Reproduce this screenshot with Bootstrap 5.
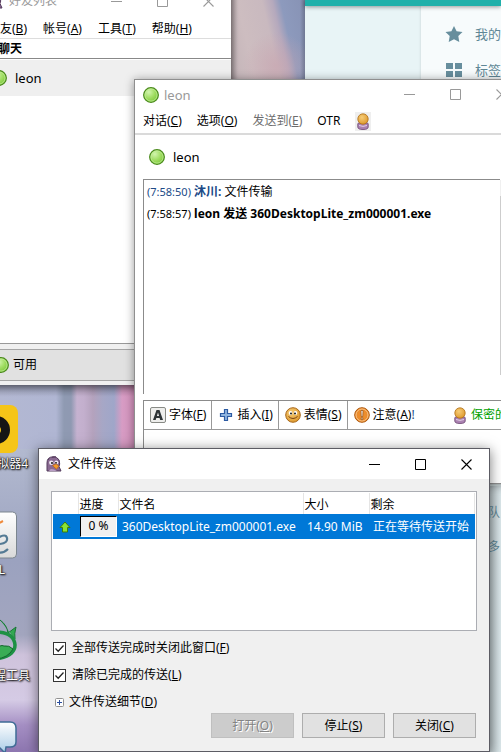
<!DOCTYPE html>
<html lang="zh-CN">
<head>
<meta charset="utf-8">
<meta name="viewport" content="width=device-width, initial-scale=1">
<title>文件传送</title>
<link href="https://cdn.jsdelivr.net/npm/bootstrap@5.3.0/dist/css/bootstrap.min.css" rel="stylesheet">
<style>
  body { font-family: "Noto Sans", "Noto Sans CJK SC", sans-serif; font-size: 12px; line-height: 18px; color: #000; }
  svg { flex: none; display: block; }
  button { font: inherit; color: inherit; white-space: nowrap; }
  .plain { border: 0; background: none; padding: 0; }
  .plain:disabled { color: #6d6d6d; }

  /* wallpaper */
  .desktop { background: linear-gradient(180deg, #a9aec6 0, #b3bad0 450px, #9ba2bf 560px, #a3a6bf 635px, #cfc3dc 655px, #d5cbe5 700px, #a58fc4 725px, #8d76b0 752px); }
  .wall-top { left: 231px; top: 0; width: 74px; height: 80px;
    background: linear-gradient(90deg, #0003 0, #0000 7px, #0000 69px, #0003 100%), radial-gradient(circle at 46px 66px, #c9a5b0aa 0, #c9a5b000 34px), linear-gradient(77deg, #c2b3b7 0, #cdbdc0 24px, #c9b9bf 48px, #b5a9bd 58px, #8d9abd 66px, #8792b4 100%); }
  .wall-mid { left: 0; top: 385px; width: 135px; height: 64px;
    background: linear-gradient(180deg, #0003 0, #0000 12px), linear-gradient(90deg, #b3b8d2 0, #b0b6d3 56px, #8f9ab2 64px, #8f99b2 71px, #c5b2d0 77px, #c3afcd 84px, #b4a2bd 93px, #a6a7c6 103px, #9fa6c9 114px, #d79cc4 122px, #d493bd 135px); }

  .win { background: #fff; }
  .muted { color: #999; }
  .person { font-size: 13px; }
  .controls { gap: 35px; }

  /* browser */
  .browser { left: 305px; right: 0; top: 0; bottom: 0; background: #e8f4f6; color: #5f8796; font-size: 13px; }
  .browser-bar { height: 6px; background: #20b0aa; box-shadow: 0 1px 4px #0006; }
  .side { margin-left: 116px; background: #f7fbfc; padding: 2px 0 0 24px; box-shadow: 0 0 3px #0002; height: 478px; }
  .side-item { height: 36px; gap: 12px; white-space: nowrap; }
  .browser-text { left: 488px; top: 486px; right: 0; color: #5f8796; background: linear-gradient(90deg, #b5c0c3, #dbe7ea 12px); bottom: 0; padding: 18px 0 0; white-space: nowrap; }

  /* buddy list */
  .buddies { left: -15px; top: -15px; width: 246px; height: 400px; box-shadow: 0 2px 7px #0007; }
  .buddies .titlebar { height: 32px; padding: 0 17px 0 2px; gap: 6px; }
  .buddies .menu { height: 22px; padding: 2px 0 0 3px; gap: 16px; border-bottom: 1px solid #ddd; }
  .group-head { height: 20px; padding: 1px 0 0 13px; font-weight: 700; border-bottom: 1px solid #888; }
  .buddy-row { height: 36px; margin-top: 1px; padding-left: 6px; gap: 8px; background: #efefef; }
  .status-wrap { background: #f0f0f0; border-top: 1px solid #999; padding: 5px 0 4px; }
  .status { height: 32px; width: 100%; background: #e1e1e1; border: 1px solid #a5a5a5; padding-left: 6px; gap: 3px; }

  /* chat */
  .chat { left: 134px; right: -14px; top: 79px; height: 405px; border: 1px solid #8f8f8f; box-shadow: 0 1px 9px #0006; }
  .chat .titlebar { height: 29px; padding: 0 7px 0 8px; gap: 5px; }
  .chat .menu { height: 26px; padding: 0 8px; gap: 15px; border-bottom: 2px solid #dadada; }
  .menu-icon { background: #efefef; padding: 1px 2px; }
  .chat-name { height: 44px; padding-left: 14px; gap: 8px; }
  .log { height: 215px; margin: 0 0 0 8px; border-top: 1px solid #8b8b8b; border-left: 1px solid #8b8b8b; padding: 1px 0 0 3px; }
  .log-text { line-height: 22px; white-space: nowrap; }
  .log-text time { font-size: 11px; }
  .blue { color: #204a87; }
  .scroller { width: 9px; background: linear-gradient(#f0f0f0 16px, #cdcdcd 16px); margin: 1px 5px 0 0; height: 195px; }
  .compose { margin: 6px 0 0 8px; border-top: 1px solid #8b8b8b; border-left: 1px solid #8b8b8b; }
  .tools { height: 29px; border-bottom: 1px solid #999; }
  .tool { height: 28px; padding: 0 5px 0 6px; gap: 3px; border-right: 1px solid #999; }
  .tool-last { border: 0; }
  .green { color: #00a000; padding: 0; }

  /* file transfers */
  .transfers { left: 38px; right: 11px; top: 448px; bottom: 0; border: 1px solid #5c5c64; background: #f0f0f0; box-shadow: 0 2px 12px #0008; }
  .transfers .titlebar { height: 30px; background: #fff; padding: 0 17px 0 7px; gap: 6px; }
  .pane { margin: 12px 12px 0; height: 140px; border: 1px solid #abadb3; background: #fff; padding: 1px; }
  .files { width: 100%; table-layout: fixed; white-space: nowrap; }
  .files th { height: 21px; font-weight: 400; padding: 3px 0 0 1px; border-right: 1px solid #e5e5e5; line-height: 18px; }
  .files td { height: 25px; padding: 0 0 0 4px; background: #0078d7; color: #fff; }
  .files td:first-child { padding-left: 5px; }
  .files td:nth-child(2) { padding: 0 1px 0 2px; }
  .gauge { height: 21px; background: #f0f0f0; color: #000; border: 1px solid #fff; border-top-color: #000; border-left-color: #000; text-align: center; }
  .opts { padding: 8px 14px 0; gap: 9px; }
  .opt { gap: 6px; }
  .opt input { appearance: none; width: 13px; height: 13px; margin: 0; border: 1px solid #333; background: #fff url("data:image/svg+xml,%3Csvg xmlns='http://www.w3.org/2000/svg' viewBox='0 0 11 11'%3E%3Cpath d='M1.5 5.5 4.2 8.2 9.5 2.5' fill='none' stroke='%23222' stroke-width='1.3'/%3E%3C/svg%3E"); }
  .more { gap: 5px; padding-left: 2px; }
  .actions { gap: 8px; padding: 2px 13px 0 0; }
  .push { width: 83px; height: 25px; border: 1px solid #adadad; background: #e1e1e1; padding: 0; }
  .push:disabled { background: #ccc; border-color: #bfbfbf; color: #838383; text-shadow: 1px 1px #fff; }

  /* desktop shortcuts */
  .shortcut { left: -40px; width: 80px; color: #fff; white-space: nowrap; text-shadow: 1px 1px 2px #000, 0 0 2px #000, 0 0 1px #000; }
  .shortcut svg { margin-left: 22px; }
  .shortcut span { display: block; text-align: right; margin-top: 2px; }
  .sc-1 { top: 405px; } .sc-2 { top: 511px; } .sc-3 { top: 618px; } .sc-4 { top: 721px; }
  .sc-1 span { padding-right: 12px; }
  .sc-2 span { padding-right: 35px; }
  .sc-3 span { padding-right: 10px; }
</style>
<script src="https://cdn.jsdelivr.net/npm/bootstrap@5.3.0/dist/js/bootstrap.bundle.min.js"></script>
</head>
<body>
<svg width="0" height="0" class="position-absolute" aria-hidden="true">
  <defs>
    <radialGradient id="gGreen" cx=".35" cy=".3" r=".75"><stop offset="0" stop-color="#d2f5ae"/><stop offset=".55" stop-color="#a0dd62"/><stop offset="1" stop-color="#7cc83c"/></radialGradient>
    <radialGradient id="gGold" cx=".4" cy=".35" r=".7"><stop offset="0" stop-color="#f6cc77"/><stop offset="1" stop-color="#dd982b"/></radialGradient>
    <linearGradient id="gPaper" x2="0" y2="1"><stop stop-color="#fff"/><stop offset="1" stop-color="#d9d9d9"/></linearGradient>
    <linearGradient id="gSky" x2="0" y2="1"><stop stop-color="#fff"/><stop offset="1" stop-color="#a9cbe6"/></linearGradient>
    <symbol id="orb" viewBox="0 0 16 16"><circle cx="8" cy="8" r="7.3" fill="url(#gGreen)" stroke="#4a8a1c" stroke-width="1.3"/><circle cx="8" cy="8" r="6.1" fill="none" stroke="#c6ef9f" stroke-width=".7"/></symbol>
    <symbol id="pawn" viewBox="0 0 12 17"><path d="M.8 11q0-1 1-1h8.400q1 0 1 1v3q0 2.500-5.200 2.500T.8 14z" fill="#ab82b2" stroke="#75507b" stroke-width=".9"/><path d="M2 12.500q4 1.800 8 0" stroke="#e3d0e6" fill="none"/><circle cx="6" cy="6" r="5.200" fill="url(#gGold)" stroke="#b06f14" stroke-width=".8"/></symbol>
    <symbol id="bird" viewBox="0 0 16 16"><path d="M1 15V7Q1 1 7 .8q2-.3 3.500.7Q14 3 13.700 8L13 10.500l2 4.500z" fill="#8a6a92" stroke="#533a5c"/><path d="M3 2.500 2 4M6 1.300 10 .8" stroke="#533a5c"/><circle cx="5.300" cy="6.800" r="2.200" fill="#efe6f2"/><circle cx="10.400" cy="6.500" r="2" fill="#efe6f2"/><circle cx="6" cy="7" r=".9"/><circle cx="10" cy="6.800" r=".9"/><path d="M6.500 9.500 10 8l3 2-2.500 3.200z" fill="#f39b2b" stroke="#b35a10" stroke-width=".6"/><path d="M3 15q1-3 5-1.500l3 1.500z" fill="#b99dc4"/></symbol>
    <symbol id="wmin" viewBox="0 0 11 11"><path d="M0 5.500h11" stroke="currentColor"/></symbol>
    <symbol id="wmax" viewBox="0 0 11 11"><path d="M.5.5h10v10H.5z" fill="none" stroke="currentColor"/></symbol>
    <symbol id="wclose" viewBox="0 0 11 11"><path d="m.5.5 10 10m0-10-10 10" stroke="currentColor" stroke-width="1.100"/></symbol>
  </defs>
</svg>

<main class="desktop position-relative vh-100 overflow-hidden">
  <div class="wall-top position-absolute"></div>
  <div class="wall-mid position-absolute"></div>

  <div class="shortcut sc-1 position-absolute">
    <svg width="36" height="48" viewBox="0 0 36 48"><rect x="-12" width="48" height="48" rx="8" fill="#f5c518"/><circle cx="14" cy="25" r="9.500" fill="none" stroke="#151515" stroke-width="9"/></svg>
    <span>模拟器4</span>
  </div>
  <div class="shortcut sc-2 position-absolute">
    <svg width="36" height="48" viewBox="0 0 36 48"><rect x="-12" y="1" width="46.500" height="46" rx="4" fill="url(#gPaper)" stroke="#7c868f"/><path d="M21 10q-4 2-7 4" fill="none" stroke="#ef8a3c" stroke-width="2"/><path d="M16 27q8-5 9 0t-7 6M15 41q6 2 11-3" fill="none" stroke="#547a94" stroke-width="2.200"/></svg>
    <span>L</span>
  </div>
  <div class="shortcut sc-3 position-absolute">
    <svg width="36" height="47" viewBox="0 0 36 47"><path d="M18 2q7 5 8 13l8-6q-2 7-1 12" fill="#32a852" stroke="#177634"/><path d="M14 14q18 0 19 13 0 11-19 14" fill="none" stroke="#1d9144" stroke-width="3.500"/><path d="M14 32q4-6 8-4 5-1 9 3-5 9-17 10z" fill="#3aad55" stroke="#14672d"/></svg>
    <span>远程工具</span>
  </div>
  <div class="shortcut sc-4 position-absolute">
    <svg width="36" height="32" viewBox="0 0 36 32"><path d="M-8 1H28q6 0 6 6v14q0 5-6 5h-4l-1 6-6-6H-8z" fill="url(#gSky)" stroke="#3f6c96" stroke-width="1.500"/></svg>
  </div>

  <section class="browser position-absolute">
    <div class="browser-bar position-relative"></div>
    <div class="side">
      <div class="side-item d-flex align-items-center pt-3">
        <svg width="18" height="16" viewBox="0 0 18 16"><path fill="#678e9d" d="m9 0 2.600 5.200 5.900.8-4.200 4.100 1 5.900L9 13.200 3.700 16l1-5.900L.5 6l5.900-.8z"/></svg><span>我的收藏</span>
      </div>
      <div class="side-item d-flex align-items-center pt-3">
        <svg width="18" height="14" viewBox="0 0 18 14"><path fill="#678e9d" d="M1 0h7v6H1zm9 0h7v6h-7zM1 8h7v6H1zm9 0h7v6h-7z"/></svg><span>标签</span>
      </div>
    </div>
  </section>
  <div class="browser-text position-absolute overflow-hidden">队<div class="pt-3">多</div></div>

  <section class="win buddies position-absolute d-flex flex-column">
    <header class="titlebar d-flex align-items-center muted">
      <svg width="16" height="16"><use href="#bird"/></svg><span class="me-auto">好友列表</span>
      <div class="controls d-flex">
        <button class="plain" aria-label="最小化"><svg width="11" height="11"><use href="#wmin"/></svg></button>
        <button class="plain" aria-label="最大化"><svg width="11" height="11"><use href="#wmax"/></svg></button>
        <button class="plain" aria-label="关闭"><svg width="11" height="11"><use href="#wclose"/></svg></button>
      </div>
    </header>
    <nav class="menu d-flex align-items-center">
      <button class="plain">好友(<u>B</u>)</button><button class="plain">帐号(<u>A</u>)</button><button class="plain">工具(<u>T</u>)</button><button class="plain">帮助(<u>H</u>)</button>
    </nav>
    <div class="group-head">聊天</div>
    <div class="buddy-row person d-flex align-items-center"><svg width="16" height="16"><use href="#orb"/></svg><span>leon</span></div>
    <div class="status-wrap mt-auto"><button class="status d-flex align-items-center"><svg width="18" height="16"><use href="#orb"/></svg>可用</button></div>
  </section>

  <section class="win chat position-absolute d-flex flex-column">
    <header class="titlebar d-flex align-items-center muted">
      <svg width="16" height="16"><use href="#orb"/></svg><span class="person me-auto">leon</span>
      <div class="controls d-flex">
        <button class="plain" aria-label="最小化"><svg width="11" height="11"><use href="#wmin"/></svg></button>
        <button class="plain" aria-label="最大化"><svg width="11" height="11"><use href="#wmax"/></svg></button>
        <button class="plain" aria-label="关闭"><svg width="11" height="11"><use href="#wclose"/></svg></button>
      </div>
    </header>
    <nav class="menu d-flex align-items-center">
      <button class="plain">对话(<u>C</u>)</button><button class="plain">选项(<u>O</u>)</button><button class="plain" disabled>发送到(<u>E</u>)</button><button class="plain">OTR</button>
      <button class="plain menu-icon" aria-label="加密"><svg width="12" height="17"><use href="#pawn"/></svg></button>
    </nav>
    <div class="chat-name person d-flex align-items-center"><svg width="16" height="16"><use href="#orb"/></svg><span>leon</span></div>
    <div class="d-flex">
      <div class="log flex-fill">
        <div class="log-text"><span class="blue"><time>(7:58:50)</time> <b>沐川:</b></span> 文件传输</div>
        <div class="log-text"><time>(7:58:57)</time> <b>leon 发送 360DesktopLite_zm000001.exe</b></div>
      </div>
      <div class="scroller"></div>
    </div>
    <div class="compose flex-fill">
      <div class="tools d-flex align-items-center">
        <button class="plain tool d-flex align-items-center"><svg width="16" height="16" viewBox="0 0 16 16"><rect x=".5" y=".5" width="15" height="15" rx="1.500" fill="#eeeeec" stroke="#888a85"/><path d="M3 13 6.500 3h3L13 13h-2.800l-.6-2H6.300l-.6 2zM6.900 9h2.200L8 5.500z" fill="#2e3436" fill-rule="evenodd"/></svg><span>字体(<u>F</u>)</span></button>
        <button class="plain tool d-flex align-items-center"><svg width="16" height="16" viewBox="0 0 16 16"><path d="M6.500 2.500h3v4h4v3h-4v4h-3v-4h-4v-3h4z" fill="#8fb5e0" stroke="#2c5ba3" stroke-width="1.200"/></svg><span>插入(<u>I</u>)</span></button>
        <button class="plain tool d-flex align-items-center"><svg width="16" height="16" viewBox="0 0 16 16"><circle cx="8" cy="8" r="7.300" fill="url(#gGold)" stroke="#a9681b"/><ellipse cx="5.500" cy="6" rx="1.800" ry="2.100" fill="#fff"/><ellipse cx="10.500" cy="6" rx="1.800" ry="2.100" fill="#fff"/><circle cx="6" cy="6.500" r=".9"/><circle cx="10" cy="6.500" r=".9"/><path d="M3.500 9.500q4.500 4 9 0" fill="none" stroke="#7a4310"/></svg><span>表情(<u>S</u>)</span></button>
        <button class="plain tool tool-last d-flex align-items-center"><svg width="16" height="16" viewBox="0 0 16 16"><circle cx="8" cy="8" r="7.300" fill="#ec8d2d" stroke="#ad560b"/><circle cx="8" cy="8" r="6" fill="none" stroke="#f8c285"/><path d="M7 3.500h2L8.700 9.500H7.300zM7.200 10.800h1.600v1.800H7.200z" fill="#fff" stroke="#7b3a05" stroke-width=".6"/></svg><span>注意(<u>A</u>)<span class="blue">!</span></span></button>
        <button class="plain tool tool-last ms-auto d-flex align-items-center green"><svg width="16" height="17"><use href="#pawn"/></svg><span>保密的</span><span class="ps-1"></span></button>
      </div>
    </div>
  </section>

  <section class="transfers position-absolute" role="dialog" aria-label="文件传送">
    <header class="titlebar d-flex align-items-center">
      <svg width="16" height="16"><use href="#bird"/></svg><span class="me-auto">文件传送</span>
      <div class="controls d-flex">
        <button class="plain" aria-label="最小化"><svg width="11" height="11"><use href="#wmin"/></svg></button>
        <button class="plain" aria-label="最大化"><svg width="11" height="11"><use href="#wmax"/></svg></button>
        <button class="plain" aria-label="关闭"><svg width="11" height="11"><use href="#wclose"/></svg></button>
      </div>
    </header>
    <div class="pane">
      <table class="files">
        <colgroup><col style="width:25px"><col style="width:40px"><col style="width:185px"><col style="width:66px"><col></colgroup>
        <thead><tr><th></th><th>进度</th><th>文件名</th><th>大小</th><th>剩余</th></tr></thead>
        <tbody><tr>
          <td><svg width="14" height="14" viewBox="0 0 14 14"><path d="M7 2 12 7.500H9.500V12h-5V7.500H2z" fill="#8ae234" stroke="#3c7d0a"/></svg></td>
          <td><div class="gauge">0 %</div></td><td>360DesktopLite_zm000001.exe</td><td>14.90 MiB</td><td>正在等待传送开始</td>
        </tr></tbody>
      </table>
    </div>
    <div class="opts d-flex flex-column align-items-start">
      <label class="opt d-flex align-items-center"><input type="checkbox" checked><span>全部传送完成时关闭此窗口(<u>F</u>)</span></label>
      <label class="opt d-flex align-items-center"><input type="checkbox" checked><span>清除已完成的传送(<u>L</u>)</span></label>
      <button class="plain more d-flex align-items-center"><svg width="9" height="9" viewBox="0 0 9 9"><rect x=".5" y=".5" width="8" height="8" rx="1" fill="#fff" stroke="#919191"/><path d="M2 4.500h5M4.500 2v5" stroke="#2b4fa0"/></svg><span>文件传送细节(<u>D</u>)</span></button>
    </div>
    <div class="actions d-flex justify-content-end">
      <button class="push" disabled>打开(<u>O</u>)</button><button class="push">停止(<u>S</u>)</button><button class="push">关闭(<u>C</u>)</button>
    </div>
  </section>
</main>
</body>
</html>
